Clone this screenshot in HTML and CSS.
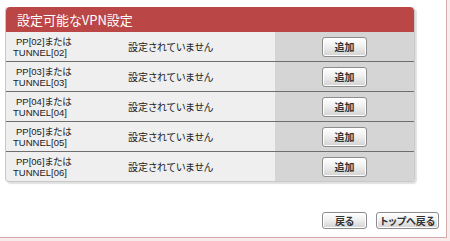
FILE: index.html
```html
<!DOCTYPE html>
<html lang="ja">
<head>
<meta charset="utf-8">
<link rel="stylesheet" href="styles.css">
</head>
<body>
<div class="page">
  <div class="panel">
    <div class="panel-head">設定可能なVPN設定</div>
    <div class="row">
      <div class="c-name"><span class="l1">PP[02]または</span><span>TUNNEL[02]</span></div>
      <div class="c-state">設定されていません</div>
      <div class="c-act"><button class="btn btn-add">追加</button></div>
    </div>
    <div class="row">
      <div class="c-name"><span class="l1">PP[03]または</span><span>TUNNEL[03]</span></div>
      <div class="c-state">設定されていません</div>
      <div class="c-act"><button class="btn btn-add">追加</button></div>
    </div>
    <div class="row">
      <div class="c-name"><span class="l1">PP[04]または</span><span>TUNNEL[04]</span></div>
      <div class="c-state">設定されていません</div>
      <div class="c-act"><button class="btn btn-add">追加</button></div>
    </div>
    <div class="row">
      <div class="c-name"><span class="l1">PP[05]または</span><span>TUNNEL[05]</span></div>
      <div class="c-state">設定されていません</div>
      <div class="c-act"><button class="btn btn-add">追加</button></div>
    </div>
    <div class="row">
      <div class="c-name"><span class="l1">PP[06]または</span><span>TUNNEL[06]</span></div>
      <div class="c-state">設定されていません</div>
      <div class="c-act"><button class="btn btn-add">追加</button></div>
    </div>
  </div>
  <div class="nav">
    <button class="btn btn-back">戻る</button>
    <button class="btn btn-top">トップへ戻る</button>
  </div>
</div>
</body>
</html>
```

FILE: styles.css
```css
html, body {
  margin: 0;
  padding: 0;
  background: #f7ebeb;
}
body {
  width: 450px;
  height: 241px;
  overflow: hidden;
  font-family: "Liberation Sans", "Noto Sans CJK JP", sans-serif;
}
.page {
  box-sizing: border-box;
  width: 447px;
  height: 238px;
  background: #ffffff;
  border-right: 1px solid #d4aaaa;
  border-bottom: 1px solid #d4aaaa;
  padding-top: 7px;
  padding-left: 5px;
}
.panel {
  width: 410px;
  box-sizing: border-box;
  border: 1px solid #c8c8c8;
  border-top: none;
  border-radius: 4px;
  background: #efefef;
  box-shadow: 2px 2px 1px rgba(0,0,0,0.12);
  overflow: hidden;
}
.panel-head {
  height: 25px;
  background: #bb4646;
  color: #ffffff;
  font-family: "Noto Sans CJK JP", sans-serif;
  font-size: 13px;
  line-height: 26px;
  padding-left: 11px;
  font-feature-settings: "palt";
  border-radius: 4px 4px 0 0;
}
.row {
  display: grid;
  grid-template-columns: 117px 152px 1fr;
  height: 29px;
  border-bottom: 1px solid #6e6e6e;
}
.row:last-child {
  border-bottom: none;
}
.c-name {
  display: flex;
  flex-direction: column;
  justify-content: center;
  padding-left: 7px;
  font-size: 9.5px;
  line-height: 11px;
  color: #222;
  font-feature-settings: "palt";
}
.c-name .l1 {
  padding-left: 3px;
}
.c-state {
  display: flex;
  align-items: center;
  padding-left: 5px;
  font-family: "Noto Sans CJK JP", sans-serif;
  font-size: 10px;
  color: #222;
  font-feature-settings: "palt";
}
.c-act {
  background: #d5d5d5;
  display: flex;
  align-items: center;
  justify-content: center;
}
.btn {
  box-sizing: border-box;
  margin: 0;
  padding: 0;
  border: 1px solid #8c8c8c;
  border-radius: 3px;
  background: linear-gradient(#ffffff 0%, #f0f0f0 45%, #d2d2d2 100%);
  box-shadow: inset 0 0 0 1px #ffffff;
  font-family: "Noto Sans CJK JP", sans-serif;
  font-size: 10px;
  font-weight: bold;
  color: #333;
  font-feature-settings: "palt";
  cursor: pointer;
}
.btn-add {
  width: 45px;
  height: 20px;
}
.nav {
  display: flex;
  justify-content: flex-end;
  gap: 9px;
  padding-right: 7px;
  margin-top: 30px;
}
.btn-back {
  width: 45px;
  height: 17px;
}
.btn-top {
  width: 63px;
  height: 17px;
}
```
